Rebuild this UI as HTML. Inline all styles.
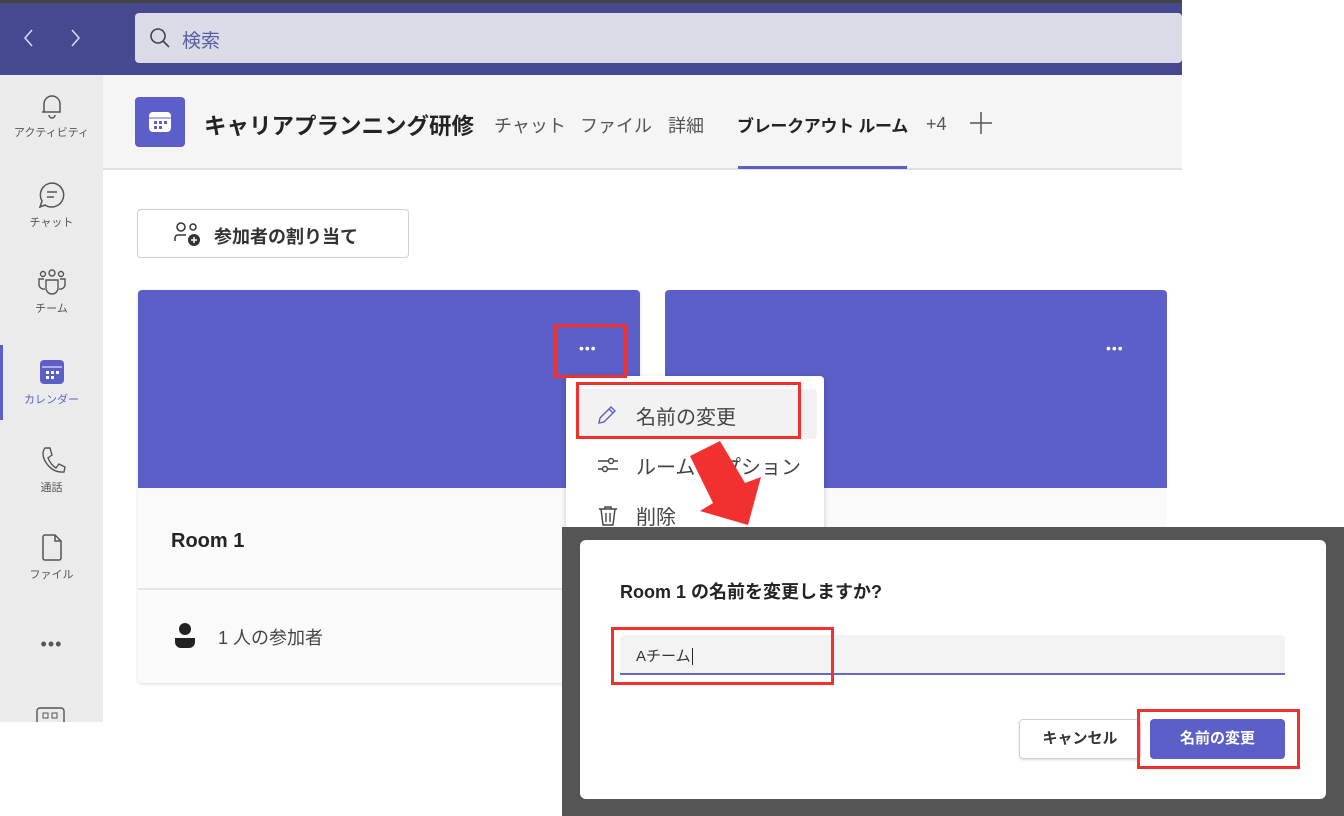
<!DOCTYPE html>
<html><head><meta charset="utf-8"><style>
*{box-sizing:border-box;margin:0;padding:0}
body{width:1344px;height:816px;position:relative;overflow:hidden;background:#fff;font-family:"Liberation Sans","Noto Sans CJK JP",sans-serif;color:#242424}
.a{position:absolute;white-space:nowrap}
.nav{position:absolute;left:0;width:103px;text-align:center;font-size:11px;color:#555}
.nav svg{display:block;margin:0 auto 4px}
.red{position:absolute;border:3px solid #f23030}
</style></head><body>
<div class="a" style="left:0;top:0;width:1182px;height:4px;background:#444"></div>
<div class="a" style="left:0;top:3px;width:1182px;height:72px;background:#464990"></div>
<svg class="a" style="left:20px;top:28px" width="70" height="20"><path d="M12 2 L5 10 L12 18 M52 2 L59 10 L52 18" stroke="#d8d8ee" stroke-width="1.6" fill="none"/></svg>
<div class="a" style="left:135px;top:13px;width:1047px;height:50px;background:#dbdbe8;border-radius:4px"></div>
<svg class="a" style="left:148px;top:26px" width="24" height="24"><circle cx="10" cy="10" r="7" stroke="#444" stroke-width="1.6" fill="none"/><path d="M15 15 L21 21" stroke="#444" stroke-width="1.6"/></svg>
<div class="a" style="left:182px;top:26px;font-size:19px;color:#5a5fa0">検索</div>

<div class="a" style="left:0;top:75px;width:103px;height:647px;background:#ebebeb"></div>
<div class="a" style="left:0;top:345px;width:3px;height:75px;background:#5b5fc7"></div>
<div class="nav" style="top:92px"><svg width="26" height="28"><path d="M5 20 V12 a8 8 0 0 1 16 0 V20 H3 M10 23 a3 3 0 0 0 6 0" stroke="#555" stroke-width="1.5" fill="none"/></svg>アクティビティ</div>
<div class="nav" style="top:180px"><svg width="30" height="30"><path d="M15 3a12 12 0 1 1 -7 22 L3 27 L5 21 A12 12 0 0 1 15 3Z M10 12h10 M10 17h7" stroke="#555" stroke-width="1.5" fill="none"/></svg>チャット</div>
<div class="nav" style="top:268px"><svg width="32" height="28"><circle cx="16" cy="5" r="3" stroke="#555" stroke-width="1.4" fill="none"/><circle cx="7" cy="6" r="2.5" stroke="#555" stroke-width="1.4" fill="none"/><circle cx="25" cy="6" r="2.5" stroke="#555" stroke-width="1.4" fill="none"/><path d="M10 12h12v8a6 6 0 0 1-12 0z M8 11H3v6a5 5 0 0 0 6 4 M24 11h5v6a5 5 0 0 1-6 4" stroke="#555" stroke-width="1.4" fill="none"/></svg>チーム</div>
<div class="nav" style="top:357px;color:#5b5fc7"><svg width="30" height="30"><rect x="3" y="3" width="24" height="24" rx="4" fill="#5b5fc7"/><path d="M5 10h20" stroke="#fff" stroke-width="1"/><g fill="#fff"><rect x="9" y="14" width="3" height="3"/><rect x="14" y="14" width="3" height="3"/><rect x="19" y="14" width="3" height="3"/><rect x="9" y="19" width="3" height="3"/><rect x="14" y="19" width="3" height="3"/></g></svg>カレンダー</div>
<div class="nav" style="top:445px"><svg width="28" height="30"><path d="M7 3 L12 3 L14 10 L10 13 Q13 20 18 23 L21 19 L27 22 L26 27 Q14 28 7 16 Q3 8 7 3Z" stroke="#555" stroke-width="1.4" fill="none"/></svg>通話</div>
<div class="nav" style="top:532px"><svg width="26" height="30"><path d="M5 3h11l6 6v17a2 2 0 0 1-2 2H6a2 2 0 0 1-2-2V5a2 2 0 0 1 2-2z M16 3v6h6" stroke="#555" stroke-width="1.5" fill="none"/></svg>ファイル</div>
<div class="nav" style="top:634px;font-size:18px;letter-spacing:1px">•••</div>
<svg class="a" style="left:36px;top:707px" width="30" height="15"><rect x="1" y="1" width="27" height="20" rx="3" stroke="#555" stroke-width="1.4" fill="none"/><rect x="7" y="6" width="5" height="5" stroke="#555" fill="none"/><rect x="16" y="6" width="5" height="5" stroke="#555" fill="none"/></svg>

<div class="a" style="left:103px;top:75px;width:1079px;height:95px;background:#f5f5f5;border-bottom:2px solid #e0e0e0"></div>
<div class="a" style="left:135px;top:97px;width:50px;height:50px;background:#5b5fc7;border-radius:4px"></div>
<svg class="a" style="left:148px;top:110px" width="24" height="24"><rect x="1" y="2" width="22" height="20" rx="4" fill="#fff"/><path d="M1 8h22" stroke="#5b5fc7" stroke-width="1"/><g fill="#5b5fc7"><rect x="6" y="11" width="3" height="3"/><rect x="11" y="11" width="3" height="3"/><rect x="16" y="11" width="3" height="3"/><rect x="6" y="16" width="3" height="3"/><rect x="11" y="16" width="3" height="3"/></g></svg>
<div class="a" style="left:204px;top:109px;font-size:22.5px;font-weight:bold">キャリアプランニング研修</div>
<div class="a" style="left:494px;top:112px;font-size:18px;color:#555">チャット</div>
<div class="a" style="left:580px;top:112px;font-size:18px;color:#555">ファイル</div>
<div class="a" style="left:668px;top:112px;font-size:18px;color:#555">詳細</div>
<div class="a" style="left:737px;top:112px;font-size:17px;font-weight:bold;letter-spacing:-0.3px">ブレークアウト ルーム</div>
<div class="a" style="left:738px;top:166px;width:169px;height:3px;background:#5b5fc7"></div>
<div class="a" style="left:926px;top:114px;font-size:18px;color:#555">+4</div>
<svg class="a" style="left:968px;top:110px" width="26" height="26"><path d="M13 2v22M2 13h22" stroke="#555" stroke-width="1.5"/></svg>

<div class="a" style="left:137px;top:209px;width:272px;height:49px;border:1px solid #d1d1d1;border-radius:4px;background:#fff"></div>
<svg class="a" style="left:174px;top:221px" width="30" height="26"><circle cx="7" cy="6" r="4" stroke="#333" stroke-width="1.5" fill="none"/><circle cx="19" cy="6" r="3" stroke="#333" stroke-width="1.5" fill="none"/><path d="M1 20v-3a3 3 0 0 1 3-3h8" stroke="#333" stroke-width="1.5" fill="none"/><circle cx="20" cy="19" r="6" fill="#333"/><path d="M20 16v6M17 19h6" stroke="#fff" stroke-width="1.5"/></svg>
<div class="a" style="left:214px;top:223px;font-size:18px;font-weight:bold;color:#333">参加者の割り当て</div>

<div class="a" style="left:138px;top:290px;width:502px;height:393px;background:#fafafa;border-radius:4px;box-shadow:0 1px 3px rgba(0,0,0,.15);overflow:hidden">
 <div style="height:198px;background:#5b5fc7"></div>
 <div style="height:102px;border-bottom:2px solid #e4e4e4;padding:42px 0 0 33px;font-size:20px;font-weight:bold">Room 1</div>
</div>
<svg class="a" style="left:173px;top:622px" width="24" height="28"><circle cx="12" cy="7" r="6" fill="#222"/><path d="M2 16h20v4a6 6 0 0 1-6 6H8a6 6 0 0 1-6-6z" fill="#222"/></svg>
<div class="a" style="left:218px;top:624px;font-size:18px;color:#444">1 人の参加者</div>
<div class="a" style="left:665px;top:290px;width:502px;height:240px;background:#fafafa;border-radius:4px;overflow:hidden"><div style="height:198px;background:#5b5fc7"></div></div>
<div class="a" style="left:579px;top:340px;color:#fff;font-size:14px;letter-spacing:1px">•••</div>
<div class="a" style="left:1106px;top:340px;color:#fff;font-size:14px;letter-spacing:1px">•••</div>

<div class="a" style="left:566px;top:376px;width:258px;height:160px;background:#fff;border-radius:4px;box-shadow:0 2px 6px rgba(0,0,0,.2)"></div>
<div class="a" style="left:577px;top:389px;width:240px;height:50px;background:#f2f2f2;border-radius:4px"></div>
<svg class="a" style="left:596px;top:404px" width="22" height="22"><path d="M3 19l1-5L15 3l4 4L8 18z M13 5l4 4" stroke="#5b5fc7" stroke-width="1.4" fill="none"/></svg>
<div class="a" style="left:636px;top:401px;font-size:20px;color:#444">名前の変更</div>
<svg class="a" style="left:596px;top:455px" width="24" height="20"><path d="M2 6h20M2 14h20" stroke="#444" stroke-width="1.4"/><circle cx="15" cy="6" r="2.5" fill="#fff" stroke="#444" stroke-width="1.4"/><circle cx="9" cy="14" r="2.5" fill="#fff" stroke="#444" stroke-width="1.4"/></svg>
<div class="a" style="left:636px;top:451px;font-size:20px;color:#444">ルーム オプション</div>
<svg class="a" style="left:597px;top:505px" width="22" height="22"><path d="M2 4h18M8 4V2h6v2M4 4l2 16h10l2-16M9 8v9M13 8v9" stroke="#444" stroke-width="1.4" fill="none"/></svg>
<div class="a" style="left:636px;top:501px;font-size:20px;color:#444">削除</div>

<svg class="a" style="left:0;top:0" width="1344" height="816"><polygon points="690,456 720,441 745,483 761,477 748,525 700,511 713,503" fill="#f23030"/></svg>

<div class="red" style="left:554px;top:324px;width:73px;height:54px"></div>
<div class="red" style="left:576px;top:382px;width:225px;height:57px"></div>

<div class="a" style="left:562px;top:527px;width:782px;height:289px;background:#555"></div>
<div class="a" style="left:580px;top:540px;width:746px;height:259px;background:#fff;border-radius:6px"></div>
<div class="a" style="left:620px;top:578px;font-size:18px;font-weight:bold">Room 1 の名前を変更しますか?</div>
<div class="a" style="left:620px;top:635px;width:665px;height:40px;background:#f3f3f3;border-radius:4px 4px 0 0;border-bottom:2px solid #6668c8"></div>
<div class="a" style="left:636px;top:645px;font-size:15px;color:#333">Aチーム<span style="border-left:1px solid #222;margin-left:1px"></span></div>
<div class="a" style="left:1019px;top:719px;width:122px;height:40px;background:#fff;border:1px solid #d1d1d1;border-radius:4px;box-shadow:0 1px 2px rgba(0,0,0,.15);font-size:15px;font-weight:bold;text-align:center;line-height:38px;color:#333">キャンセル</div>
<div class="a" style="left:1150px;top:719px;width:135px;height:40px;background:#5b5fc7;border-radius:4px;font-size:15px;font-weight:bold;text-align:center;line-height:40px;color:#fff">名前の変更</div>
<div class="red" style="left:611px;top:627px;width:223px;height:58px"></div>
<div class="red" style="left:1137px;top:709px;width:163px;height:60px"></div>
</body></html>
